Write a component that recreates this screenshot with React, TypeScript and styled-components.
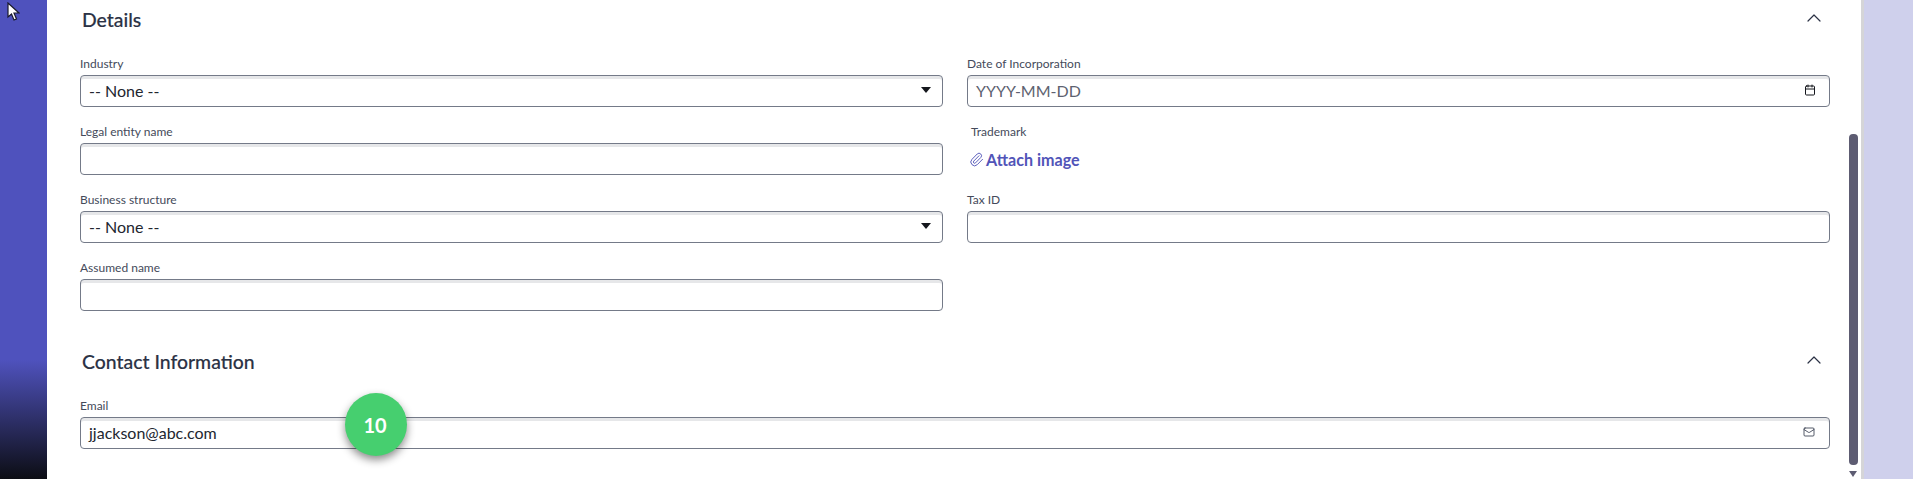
import styled, { createGlobalStyle } from "styled-components";
import { Calendar, ChevronUp, Mail, Paperclip } from "lucide-react";

const GlobalStyle = createGlobalStyle`
  html, body {
    margin: 0;
    padding: 0;
    height: 100%;
    overflow: hidden;
    background: #fff;
    font-family: Lato, "Open Sans", sans-serif;
  }
`;

const Page = styled.div`
  position: relative;
  display: flex;
  width: 1913px;
  height: 479px;
  overflow: hidden;
`;

const Sidebar = styled.aside`
  flex: 0 0 47px;
  background: linear-gradient(to bottom, #4f52bd 0, #4f52bd 360px, #0c0d14 479px);
`;

const Main = styled.main`
  position: relative;
  flex: 1;
  padding: 7px 31px 0 33px;
`;

const SectionHead = styled.div<{ $gap: number }>`
  display: flex;
  align-items: center;
  justify-content: space-between;
  height: 24px;
  padding: 0 4px 0 2px;
  margin-top: ${(p) => p.$gap}px;
  margin-bottom: 26px;
  color: #2b3245;
  font-size: 19.4px;
  font-weight: 500;
  -webkit-text-stroke: 0.15px #2b3245;

  svg {
    color: #2b3245;
    margin-top: -2px;
  }
`;

const Grid = styled.div`
  display: grid;
  grid-template-columns: 863px 863px;
  column-gap: 24px;
  grid-auto-rows: 68px;
`;

const Field = styled.div`
  display: flex;
  flex-direction: column;
`;

const Label = styled.label<{ $indent?: number }>`
  height: 18px;
  line-height: 14px;
  padding-left: ${(p) => p.$indent ?? 0}px;
  font-size: 12px;
  color: #444a5a;
`;

const InputBox = styled.div`
  display: flex;
  align-items: center;
  justify-content: space-between;
  box-sizing: border-box;
  height: 32px;
  padding: 0 14px 2px 8px;
  border: 1px solid #747a88;
  border-radius: 4px;
  box-shadow: inset 0 3px 0 #e6e7e9;
  font-size: 16px;
  color: #22262f;
`;

const Placeholder = styled.span`
  color: #5d6270;
`;

const CaretDown = styled.span`
  width: 0;
  height: 0;
  margin-right: -3px;
  border-left: 5px solid transparent;
  border-right: 5px solid transparent;
  border-top: 6px solid #15171d;
`;

const AttachLink = styled.a`
  display: flex;
  align-items: center;
  gap: 2px;
  height: 32px;
  padding-left: 2px;
  color: #5154b8;
  font-size: 16.1px;
  font-weight: 700;
`;

const ScrollThumb = styled.div`
  position: absolute;
  left: 1802px;
  top: 134px;
  width: 9px;
  height: 331px;
  border-radius: 4px;
  background: #5d5c72;
`;

const ScrollArrow = styled.div`
  position: absolute;
  left: 1802px;
  top: 471px;
  width: 0;
  height: 0;
  border-left: 4.5px solid transparent;
  border-right: 4.5px solid transparent;
  border-top: 6px solid #5d5c72;
`;

const Rail = styled.div`
  flex: 0 0 49px;
  border-left: 3px solid #d5d5d8;
  background: #cfd0ec;
`;

const StepBadge = styled.div`
  position: absolute;
  left: 345px;
  top: 393px;
  display: flex;
  align-items: center;
  justify-content: center;
  width: 62px;
  height: 63px;
  padding-right: 2px;
  box-sizing: border-box;
  border-radius: 50%;
  background: #46cf6f;
  box-shadow: 0 4px 8px rgba(0, 0, 0, 0.45);
  color: #fff;
  font-size: 20px;
  font-weight: 700;
`;

const Cursor = styled.svg`
  position: absolute;
  left: 7px;
  top: 2px;
`;

const DateIcon = styled(Calendar)`
  margin-right: -1px;
`;

export default function App() {
  return (
    <Page>
      <GlobalStyle />
      <Sidebar />
      <Main>
        <SectionHead $gap={0}>
          Details
          <ChevronUp size={24} strokeWidth={1.2} />
        </SectionHead>
        <Grid>
          <Field>
            <Label>Industry</Label>
            <InputBox>
              -- None --
              <CaretDown />
            </InputBox>
          </Field>
          <Field>
            <Label>Date of Incorporation</Label>
            <InputBox>
              <Placeholder>YYYY-MM-DD</Placeholder>
              <DateIcon size={12} strokeWidth={2} color="#15171d" />
            </InputBox>
          </Field>
          <Field>
            <Label>Legal entity name</Label>
            <InputBox />
          </Field>
          <Field>
            <Label $indent={4}>Trademark</Label>
            <AttachLink>
              <Paperclip size={15} strokeWidth={1.5} />
              Attach image
            </AttachLink>
          </Field>
          <Field>
            <Label>Business structure</Label>
            <InputBox>
              -- None --
              <CaretDown />
            </InputBox>
          </Field>
          <Field>
            <Label>Tax ID</Label>
            <InputBox />
          </Field>
          <Field>
            <Label>Assumed name</Label>
            <InputBox />
          </Field>
        </Grid>
        <SectionHead $gap={20}>
          Contact Information
          <ChevronUp size={24} strokeWidth={1.2} />
        </SectionHead>
        <Field>
          <Label>Email</Label>
          <InputBox>
            jjackson@abc.com
            <Mail size={12} strokeWidth={1.6} color="#2b3245" />
          </InputBox>
        </Field>
        <ScrollThumb />
        <ScrollArrow />
      </Main>
      <Rail />
      <StepBadge>10</StepBadge>
      <Cursor width="13" height="20" viewBox="0 0 13 20">
        <path d="M1 1 L1 15 L4.5 12 L7 18 L9.5 17 L7 11 L12 11 Z" fill="#fff" stroke="#1a1a2a" strokeWidth="1.2" />
      </Cursor>
    </Page>
  );
}
